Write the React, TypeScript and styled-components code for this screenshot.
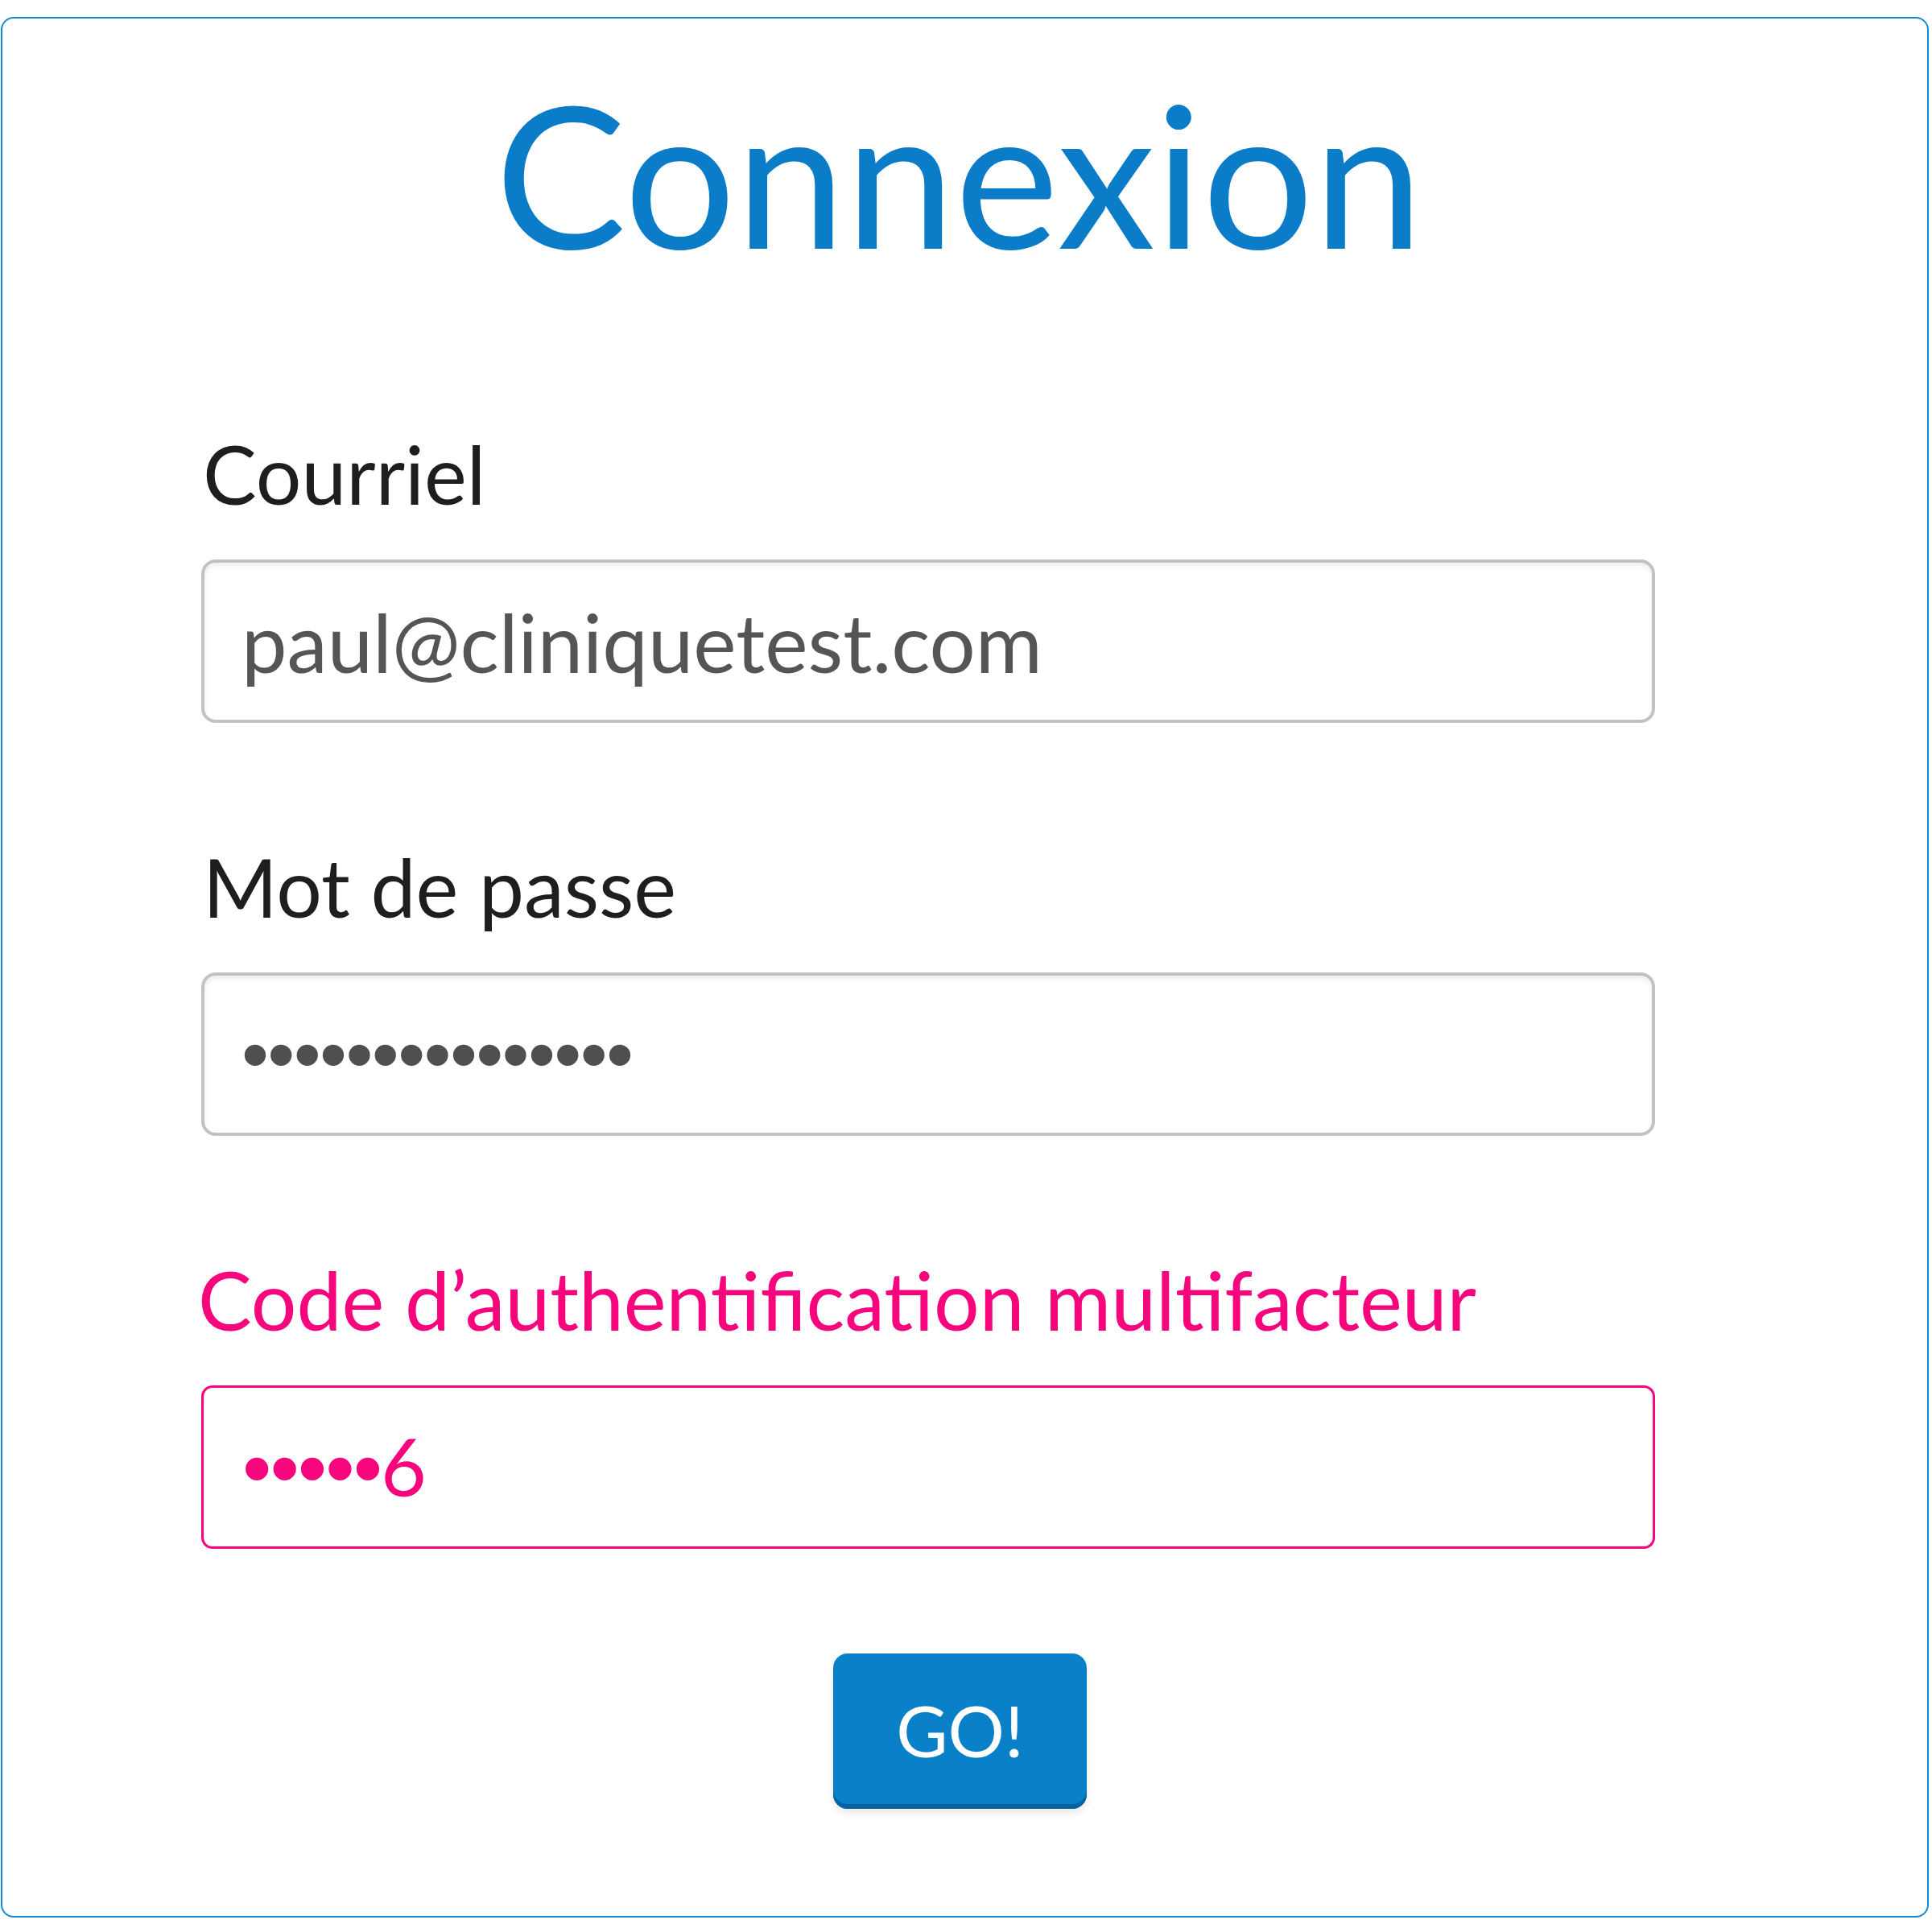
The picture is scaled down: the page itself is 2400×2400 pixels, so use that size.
import styled, { createGlobalStyle } from 'styled-components';

const GlobalStyle = createGlobalStyle`
  html, body {
    margin: 0;
    padding: 0;
    background: #ffffff;
  }
  body {
    font-family: Lato, "Noto Sans", "Liberation Sans", sans-serif;
  }
`;

const Card = styled.div`
  box-sizing: border-box;
  width: 2395px;
  height: 2361px;
  margin: 21px 0 0 1px;
  padding-top: 68px;
  border: 2px solid #1089d2;
  border-radius: 16px;
  background: #fff;
  display: flex;
  flex-direction: column;
  align-items: center;
`;

const Title = styled.h1`
  margin: 0;
  font-size: 244px;
  line-height: 248px;
  font-weight: 400;
  color: #0a7cc8;
  margin-left: -14px;
`;

const Form = styled.form`
  align-self: flex-start;
  box-sizing: border-box;
  width: 1806px;
  margin-left: 247px;
  margin-top: 197px;
  display: flex;
  flex-direction: column;
`;

const Field = styled.div<{ $first?: boolean }>`
  display: flex;
  flex-direction: column;
  gap: 55px;
  margin-top: ${(p) => (p.$first ? '0' : '151px')};
`;

const Label = styled.label<{ $alert?: boolean }>`
  font-size: 100px;
  line-height: 104px;
  color: ${(p) => (p.$alert ? '#f7057c' : '#1e1e1e')};
  margin-left: ${(p) => (p.$alert ? '-4px' : '2px')};
`;

const Box = styled.div<{ $alert?: boolean }>`
  box-sizing: border-box;
  height: 203px;
  display: flex;
  align-items: center;
  padding-left: ${(p) => (p.$alert ? '48px' : '46px')};
  border-radius: ${(p) => (p.$alert ? '14px' : '18px')};
  border: ${(p) => (p.$alert ? '3px solid #f7057c' : '4px solid #c2c2c2')};
  box-shadow: ${(p) => (p.$alert ? 'none' : 'inset 0 4px 6px rgba(0, 0, 0, 0.07)')};
  background: #fff;
`;

const Value = styled.span`
  font-size: 101px;
  color: #555;
`;

const Masked = styled.span<{ $alert?: boolean }>`
  font-family: "Liberation Sans", Arial, sans-serif;
  font-size: ${(p) => (p.$alert ? '104px' : '97px')};
  letter-spacing: ${(p) => (p.$alert ? '-2px' : '-1.6px')};
  color: ${(p) => (p.$alert ? '#f7057c' : '#4f4f4f')};
`;

const Digit = styled.span`
  font-family: Lato, "Noto Sans", sans-serif;
  font-size: 98px;
  letter-spacing: 0;
`;

const Actions = styled.div`
  margin-top: 130px;
  display: flex;
  justify-content: center;
  width: 100%;
  padding-right: 12px;
  box-sizing: border-box;
`;

const GoButton = styled.button`
  width: 315px;
  height: 193px;
  border: none;
  border-radius: 18px;
  background: #0a80c9;
  box-shadow: inset 0 -6px 0 #05649f, 0 6px 10px rgba(0, 0, 0, 0.08);
  color: #fff;
  font-family: Lato, "Noto Sans", sans-serif;
  font-size: 88px;
  font-weight: 400;
  padding: 0 0 4px;
  cursor: pointer;
`;

export default function App() {
  return (
    <>
      <GlobalStyle />
      <Card>
        <Title>Connexion</Title>
        <Form onSubmit={(e) => e.preventDefault()}>
          <Field $first>
            <Label>Courriel</Label>
            <Box>
              <Value>paul@cliniquetest.com</Value>
            </Box>
          </Field>
          <Field>
            <Label>Mot de passe</Label>
            <Box>
              <Masked>•••••••••••••••</Masked>
            </Box>
          </Field>
          <Field>
            <Label $alert>Code d’authentification multifacteur</Label>
            <Box $alert>
              <Masked $alert>
                •••••<Digit>6</Digit>
              </Masked>
            </Box>
          </Field>
        </Form>
        <Actions>
          <GoButton type="submit">GO!</GoButton>
        </Actions>
      </Card>
    </>
  );
}
